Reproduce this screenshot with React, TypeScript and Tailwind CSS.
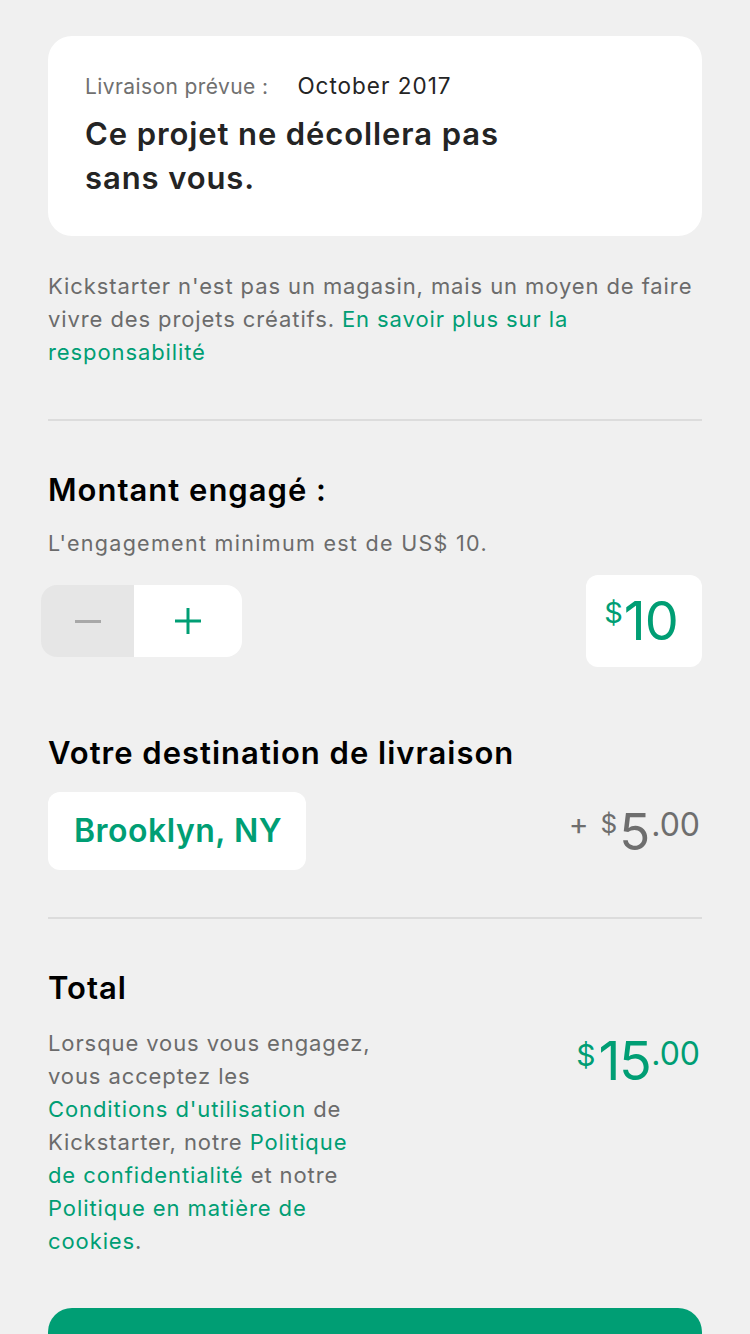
import React from "react"

const green = "text-[#009e74]"

const App: React.FC = () => {
  return (
    <div
      className="min-h-[1334px] bg-[#f0f0f0] px-[48px] pt-[36px] overflow-hidden"
      style={{ fontFamily: "Inter, 'Noto Sans', sans-serif" }}
    >
      {/* delivery card */}
      <div className="bg-white rounded-[24px] px-[37px] pt-[36px] pb-[36px]">
        <p className="leading-[28px] whitespace-nowrap">
          <span className="text-[21px] tracking-[0.4px] text-[#707070]">Livraison prévue :</span>
          <span className="text-[22.5px] tracking-[1px] text-[#242424] ml-[29px]">October 2017</span>
        </p>
        <h2 className="mt-[10px] text-[31px] leading-[44px] font-semibold text-[#242424] tracking-[0.9px]">
          Ce projet ne décollera pas
          <br />
          sans vous.
        </h2>
      </div>

      <p className="mt-[34px] text-[22px] leading-[33px] text-[#6b6b6b] tracking-[0.9px] whitespace-nowrap">
        Kickstarter n'est pas un magasin, mais un moyen de faire
        <br />
        vivre des projets créatifs. <span className={green}>En savoir plus sur la</span>
        <br />
        <span className={green}>responsabilité</span>
      </p>

      <div className="mt-[50px] h-[2px] bg-[#dcdcdc]" />

      {/* pledge amount */}
      <h3 className="mt-[51px] text-[31px] leading-[36px] font-semibold text-black tracking-[1px]">
        Montant engagé :
      </h3>
      <p className="mt-[21px] text-[21.5px] leading-[28px] text-[#6b6b6b] tracking-[1.3px]">
        L'engagement minimum est de US$ 10.
      </p>

      <div className="mt-[18px] flex items-center justify-between">
        <div className="-ml-[7px] flex h-[72px] w-[201px] rounded-[16px] overflow-hidden">
          <div className="w-[93px] bg-[#e6e6e6] flex items-center justify-center">
            <div className="w-[26px] h-[3px] bg-[#a8a8a8]" />
          </div>
          <div className="flex-1 bg-white flex items-center justify-center">
            <svg width="28" height="28" viewBox="0 0 28 28">
              <path d="M14 1v26M1 14h26" stroke="#009e74" strokeWidth="3" />
            </svg>
          </div>
        </div>
        <div className="h-[92px] w-[116px] bg-white rounded-[12px] flex justify-center pt-[19px]">
          <div className={`${green} flex items-start h-[54px] -ml-[6px]`}>
            <span className="text-[29px] leading-none mt-[4px]">$</span>
            <span className="text-[54px] leading-none tracking-[-1px] ml-[1px]">10</span>
          </div>
        </div>
      </div>

      {/* shipping */}
      <h3 className="mt-[68px] text-[31px] leading-[36px] font-semibold text-black tracking-[1px]">
        Votre destination de livraison
      </h3>

      <div className="mt-[21px] flex items-start justify-between">
        <div className="h-[78px] w-[258px] bg-white rounded-[12px] flex items-center pl-[26px]">
          <span className={`${green} text-[32px] font-semibold tracking-[0.5px]`}>Brooklyn, NY</span>
        </div>
        <div className="flex items-start text-[#6e6e6e] mt-[14px] mr-[2px]">
          <span className="text-[30px] leading-none mt-[3px]">+</span>
          <span className="text-[26px] leading-none mt-[5px] ml-[12px]">$</span>
          <span className="text-[51px] leading-none ml-[2px]">5</span>
          <span className="text-[32px] leading-none mt-[3px] ml-[1px]">.00</span>
        </div>
      </div>

      <div className="mt-[47px] h-[2px] bg-[#dcdcdc]" />

      {/* total */}
      <div className="mt-[51px] flex justify-between">
        <div>
          <h3 className="text-[31px] leading-[36px] font-semibold text-black tracking-[1px]">Total</h3>
          <p className="mt-[21px] text-[22px] leading-[33px] text-[#6b6b6b] tracking-[0.9px] whitespace-nowrap">
            Lorsque vous vous engagez,
            <br />
            vous acceptez les
            <br />
            <span className={green}>Conditions d'utilisation</span> de
            <br />
            Kickstarter, notre <span className={green}>Politique</span>
            <br />
            <span className={green}>de confidentialité</span> et notre
            <br />
            <span className={green}>Politique en matière de</span>
            <br />
            <span className={green}>cookies</span>.
          </p>
        </div>
        <div className={`${green} flex items-start mt-[64px] mr-[2px] h-[54px]`}>
          <span className="text-[30px] leading-none mt-[6px]">$</span>
          <span className="text-[54px] leading-none tracking-[-1.5px] ml-[3px]">15</span>
          <span className="text-[32px] leading-none mt-[4px] ml-[1px]">.00</span>
        </div>
      </div>

      <div className="mt-[50px] h-[80px] bg-[#009e74] rounded-[24px]" />
    </div>
  )
}

export default App
